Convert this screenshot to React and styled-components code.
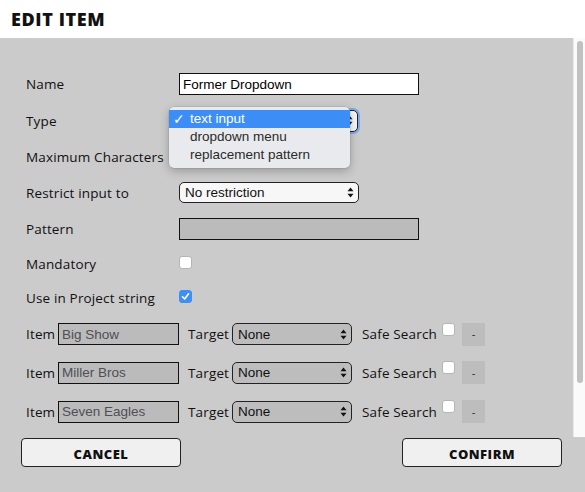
import React from "react";
import styled, { createGlobalStyle } from "styled-components";

const GlobalStyle = createGlobalStyle`
  html, body { margin: 0; padding: 0; }
  body { background: #fff; font-family: "Open Sans", sans-serif; color: #111; }
`;

const Page = styled.div`
  width: 585px;
  height: 492px;
  display: flex;
  flex-direction: column;
  overflow: hidden;
`;

const Header = styled.header`
  height: 38px;
  flex: none;
  background: #fff;
  display: flex;
  align-items: center;
  padding-left: 11px;

  h1 {
    margin: 0;
    font-size: 18px;
    font-weight: 800;
    color: #111;
    letter-spacing: 0.6px;
  }
`;

const Body = styled.div`
  flex: 1;
  background: #cbcbcb;
  display: flex;
  flex-direction: column;
`;

const ScrollArea = styled.div`
  height: 399px;
  flex: none;
  display: flex;
`;

const Form = styled.div`
  flex: 1;
  padding: 28px 0 0 26px;
  overflow: hidden;
`;

const Track = styled.div`
  flex: none;
  width: 12px;
  box-sizing: border-box;
  background: #fafafa;
  border-left: 1px solid #e8e8e8;
  padding: 3px 2px 0 3px;
`;

const Thumb = styled.div`
  height: 342px;
  background: #c1c1c1;
  border-radius: 4px;
`;

const Row = styled.div`
  display: flex;
  align-items: center;
  height: ${(p) => p.h || 36}px;
`;

const Label = styled.span`
  flex: none;
  width: ${(p) => p.w || 153}px;
  margin-left: ${(p) => p.ml || 0}px;
  font-size: 13.5px;
  letter-spacing: 0.15px;
  color: #111;
  white-space: nowrap;
`;

const TextInput = styled.input`
  box-sizing: border-box;
  width: ${(p) => p.w}px;
  height: 22px;
  margin: 0;
  padding: 0 3px;
  border: 1px solid #111;
  background: ${(p) => (p.disabled ? "#bbbbbb" : "#ffffff")};
  color: ${(p) => (p.disabled ? "#4f4f55" : "#000")};
  font-family: "Liberation Sans", Arial, sans-serif;
  font-size: 13.5px;
  outline: none;
`;

const SelectWrap = styled.div`
  position: relative;
  flex: none;
`;

const SelectBox = styled.div`
  box-sizing: border-box;
  width: ${(p) => p.w}px;
  height: ${(p) => p.h || 22}px;
  border: 1px solid #222;
  border-radius: 5px;
  background: ${(p) => (p.dim ? "#bdbdbd" : "#f7f7f7")};
  display: flex;
  align-items: center;
  justify-content: space-between;
  padding: 0 4px 0 5px;
  font-family: "Liberation Sans", Arial, sans-serif;
  font-size: 13.5px;
  color: #111;
  box-shadow: ${(p) => (p.focus ? "0 0 0 2px rgba(70,150,250,0.6)" : "none")};
`;

const SelectValue = styled.span`
  visibility: ${(p) => (p.covered ? "hidden" : "visible")};
`;

const Menu = styled.ul`
  position: absolute;
  left: -10px;
  top: -3px;
  width: 181px;
  margin: 0;
  padding: 3px 0 4px;
  list-style: none;
  background: #e9eaed;
  border-radius: 5px;
  box-shadow: 0 3px 10px rgba(0, 0, 0, 0.25), 0 0 0 0.5px rgba(0, 0, 0, 0.12);
  font-family: "Liberation Sans", Arial, sans-serif;
  font-size: 13.5px;
  z-index: 5;
`;

const MenuItem = styled.li`
  display: flex;
  align-items: center;
  height: 18px;
  line-height: 18px;
  padding-left: 21px;
  background: ${(p) => (p.active ? "#3c8ef6" : "transparent")};
  color: ${(p) => (p.active ? "#fff" : "#2a2a2a")};
`;

const MenuTick = styled.span`
  flex: none;
  width: 14px;
  margin-left: -17px;
  margin-right: 3px;
  font-family: "DejaVu Sans", sans-serif;
  font-size: 14px;
  font-weight: 700;
`;

const Check = styled.span`
  flex: none;
  box-sizing: border-box;
  width: 13px;
  height: 13px;
  border-radius: 3px;
  background: ${(p) => (p.on ? "#3d8ff6" : "#fff")};
  border: 1px solid ${(p) => (p.on ? "#3d8ff6" : "#b5b5b5")};
  display: flex;
  align-items: center;
  justify-content: center;
  margin-top: ${(p) => p.raise || 0}px;
  margin-right: ${(p) => p.mr || 0}px;
`;

const MinusBtn = styled.button`
  flex: none;
  width: 23px;
  height: 23px;
  padding: 0;
  border: none;
  background: #bdbdbd;
  color: #333;
  font-family: "Liberation Sans", Arial, sans-serif;
  font-size: 11px;
`;

const Footer = styled.div`
  flex: 1;
  display: flex;
  justify-content: space-between;
  align-items: flex-start;
  padding: 1px 23px 0 21px;
`;

const Button = styled.button`
  width: 160px;
  height: 29px;
  box-sizing: border-box;
  border: 1px solid #222;
  border-radius: 4px;
  background: #f0f0f0;
  font-family: "Open Sans", sans-serif;
  font-weight: 800;
  font-size: 13px;
  color: #111;
  letter-spacing: 0.5px;
  padding: 2px 0 0;
`;

const Arrows = () => (
  <svg width="7" height="11" viewBox="0 0 7 11">
    <path d="M3.5 0.5 L6.5 4.2 H0.5 Z" fill="#111" />
    <path d="M3.5 10.5 L6.5 6.8 H0.5 Z" fill="#111" />
  </svg>
);

const Tick = () => (
  <svg width="9" height="9" viewBox="0 0 9 9">
    <path d="M1.5 4.8 L3.6 7 L7.6 1.8" fill="none" stroke="#fff" strokeWidth="1.6" strokeLinecap="round" strokeLinejoin="round" />
  </svg>
);

const Select = ({ value, w, h, dim, focus, children }) => (
  <SelectWrap>
    <SelectBox w={w} h={h} dim={dim} focus={focus}>
      <SelectValue covered={!!children}>{value}</SelectValue>
      <Arrows />
    </SelectBox>
    {children}
  </SelectWrap>
);

const items = ["Big Show", "Miller Bros", "Seven Eagles"];

export default function App() {
  return (
    <Page>
      <GlobalStyle />
      <Header>
        <h1>EDIT ITEM</h1>
      </Header>
      <Body>
        <ScrollArea>
          <Form>
            <Row h={36}>
              <Label>Name</Label>
              <TextInput w={240} defaultValue="Former Dropdown" />
            </Row>
            <Row h={37}>
              <Label>Type</Label>
              <Select value="text input" w={179} h={22} focus>
                <Menu>
                  <MenuItem active>
                    <MenuTick>✓</MenuTick>text input
                  </MenuItem>
                  <MenuItem>dropdown menu</MenuItem>
                  <MenuItem>replacement pattern</MenuItem>
                </Menu>
              </Select>
            </Row>
            <Row h={35}>
              <Label>Maximum Characters</Label>
            </Row>
            <Row h={37}>
              <Label>Restrict input to</Label>
              <Select value="No restriction" w={180} h={21} />
            </Row>
            <Row h={36}>
              <Label>Pattern</Label>
              <TextInput w={240} disabled />
            </Row>
            <Row h={34}>
              <Label>Mandatory</Label>
              <Check raise={-4} />
            </Row>
            <Row h={34}>
              <Label>Use in Project string</Label>
              <Check on raise={-4}>
                <Tick />
              </Check>
            </Row>
            {items.map((name, i) => (
              <Row h={i === 0 ? 38 : 39} key={name}>
                <Label w={32}>Item</Label>
                <TextInput w={121} disabled defaultValue={name} />
                <Label w={44} ml={9}>Target</Label>
                <Select value="None" w={120} dim />
                <Label w={80} ml={10}>Safe Search</Label>
                <Check raise={-10} mr={7} />
                <MinusBtn>-</MinusBtn>
              </Row>
            ))}
          </Form>
          <Track>
            <Thumb />
          </Track>
        </ScrollArea>
        <Footer>
          <Button>CANCEL</Button>
          <Button>CONFIRM</Button>
        </Footer>
      </Body>
    </Page>
  );
}
